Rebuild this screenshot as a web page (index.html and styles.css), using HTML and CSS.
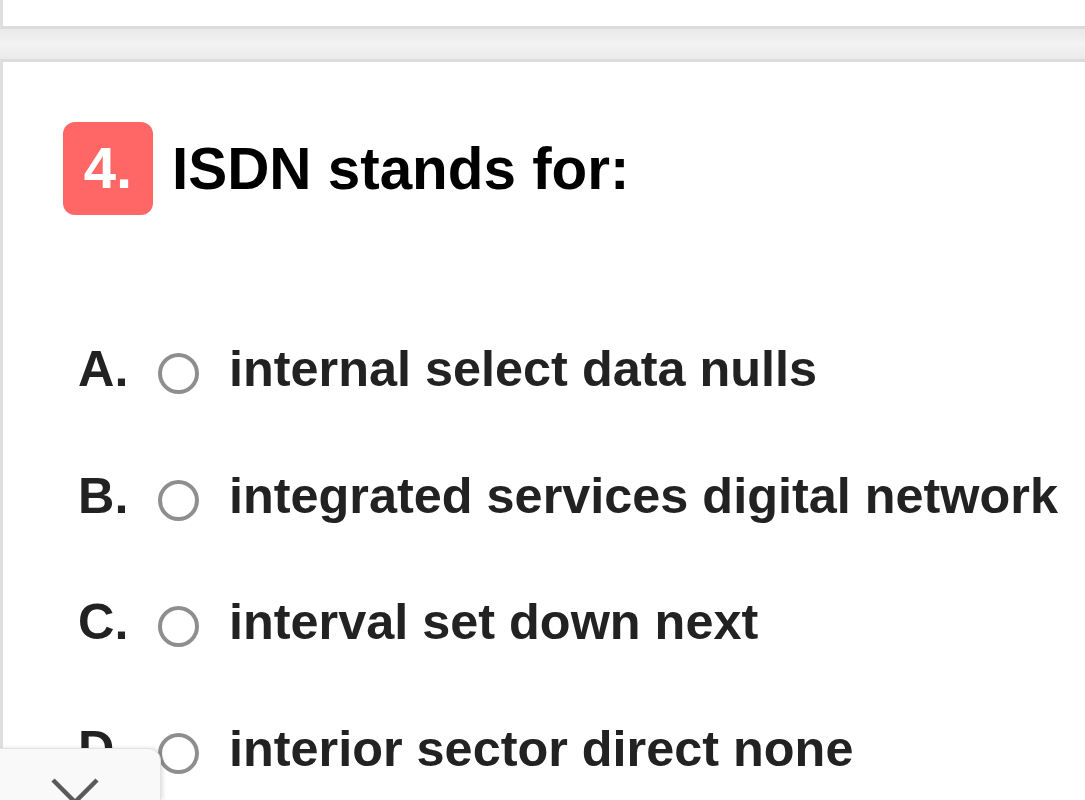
FILE: index.html
```html
<!DOCTYPE html>
<html lang="en">
<head>
<meta charset="utf-8">
<title>Quiz</title>
<link rel="stylesheet" href="styles.css">
</head>
<body>
<div class="page">
  <div class="card card-prev"></div>
  <div class="band"></div>
  <div class="card card-question">
    <div class="question-head">
      <span class="badge">4.</span>
      <h2 class="question-title">ISDN stands for:</h2>
    </div>
    <ul class="options">
      <li class="option"><span class="opt-letter">A.</span><span class="radio"></span><span class="opt-text">internal select data nulls</span></li>
      <li class="option"><span class="opt-letter">B.</span><span class="radio"></span><span class="opt-text">integrated services digital network</span></li>
      <li class="option"><span class="opt-letter">C.</span><span class="radio"></span><span class="opt-text">interval set down next</span></li>
      <li class="option"><span class="opt-letter">D.</span><span class="radio"></span><span class="opt-text">interior sector direct none</span></li>
    </ul>
  </div>
</div>
<div class="dock">
  <svg class="chev" width="60" height="40" viewBox="0 0 60 40" aria-hidden="true">
    <polyline points="8,4 30,26 52,4" fill="none" stroke="#5a5a5a" stroke-width="4.5" stroke-linecap="butt"/>
  </svg>
</div>
</body>
</html>
```

FILE: styles.css
```css
html, body {
  margin: 0;
  padding: 0;
  background: #ffffff;
  overflow: hidden;
  height: 800px;
}
body {
  font-family: "Liberation Sans", Arial, sans-serif;
}
.page {
  width: 100%;
}
.card {
  background: #ffffff;
  border-left: 3px solid #dedede;
}
.card-prev {
  height: 26px;
  border-bottom: 3px solid #dcdcdc;
}
.band {
  height: 30px;
  background: linear-gradient(#e9e9e9, #f2f2f2 45%, #f2f2f2 55%, #eaeaea);
}
.card-question {
  border-top: 3px solid #dcdcdc;
  padding: 60px 0 0 60px;
  height: 738px;
  box-sizing: border-box;
  overflow: hidden;
}
.question-head {
  display: flex;
  align-items: center;
}
.badge {
  display: flex;
  align-items: center;
  justify-content: center;
  width: 90px;
  height: 93px;
  border-radius: 12px;
  background: #ff6666;
  color: #ffffff;
  font-weight: 700;
  font-size: 58px;
  line-height: 1;
  padding-bottom: 2px;
  box-sizing: border-box;
  flex: none;
}
.question-title {
  margin: 0 0 0 19px;
  font-size: 58.4px;
  font-weight: 700;
  color: #000000;
  line-height: 1.15;
  white-space: nowrap;
}
.options {
  list-style: none;
  margin: 125px 0 0 15px;
  padding: 0;
  display: flex;
  flex-direction: column;
  gap: 68.5px;
}
.option {
  display: flex;
  align-items: flex-start;
  font-size: 50.4px;
  font-weight: 700;
  line-height: 58px;
  color: #222222;
  white-space: nowrap;
}
.opt-letter {
  width: 80px;
  flex: none;
}
.radio {
  width: 41px;
  height: 41px;
  box-sizing: border-box;
  border: 4px solid #8e8e8e;
  border-radius: 50%;
  margin-top: 13px;
  flex: none;
}
.opt-text {
  margin-left: 30px;
}
.dock {
  position: fixed;
  left: 0;
  bottom: 0;
  width: 160px;
  height: 51px;
  background: #f9f9f9;
  border: 1px solid #e2e2e2;
  border-left: none;
  border-bottom: none;
  border-top-right-radius: 13px;
  box-shadow: 2px 0 4px rgba(0,0,0,0.12);
}
.chev {
  position: absolute;
  left: 45px;
  top: 27px;
}
```
